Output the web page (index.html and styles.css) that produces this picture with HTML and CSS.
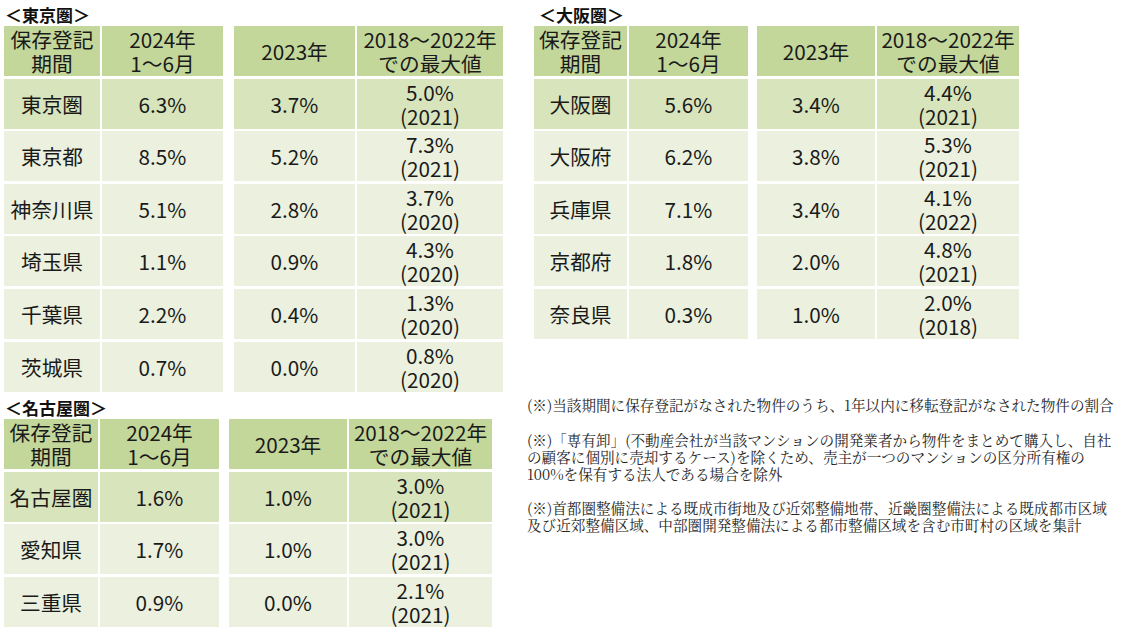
FILE: index.html
```html
<!DOCTYPE html>
<html lang="ja">
<head>
<meta charset="utf-8">
<link rel="stylesheet" href="styles.css">
</head>
<body>
<div class="page">
  <section class="region tokyo">
    <div class="label">＜東京圏＞</div>
    <div class="tbl">
      <div class="half a">
        <div class="c h">保存登記<br>期間</div><div class="c h">2024年<br>1～6月</div>
        <div class="c r1">東京圏</div><div class="c r1">6.3%</div>
        <div class="c">東京都</div><div class="c">8.5%</div>
        <div class="c">神奈川県</div><div class="c">5.1%</div>
        <div class="c">埼玉県</div><div class="c">1.1%</div>
        <div class="c">千葉県</div><div class="c">2.2%</div>
        <div class="c">茨城県</div><div class="c">0.7%</div>
      </div>
      <div class="half b">
        <div class="c h">2023年</div><div class="c h">2018～2022年<br>での最大値</div>
        <div class="c r1">3.7%</div><div class="c r1">5.0%<br>(2021)</div>
        <div class="c">5.2%</div><div class="c">7.3%<br>(2021)</div>
        <div class="c">2.8%</div><div class="c">3.7%<br>(2020)</div>
        <div class="c">0.9%</div><div class="c">4.3%<br>(2020)</div>
        <div class="c">0.4%</div><div class="c">1.3%<br>(2020)</div>
        <div class="c">0.0%</div><div class="c">0.8%<br>(2020)</div>
      </div>
    </div>
  </section>

  <section class="region osaka">
    <div class="label">＜大阪圏＞</div>
    <div class="tbl">
      <div class="half a">
        <div class="c h">保存登記<br>期間</div><div class="c h">2024年<br>1～6月</div>
        <div class="c r1">大阪圏</div><div class="c r1">5.6%</div>
        <div class="c">大阪府</div><div class="c">6.2%</div>
        <div class="c">兵庫県</div><div class="c">7.1%</div>
        <div class="c">京都府</div><div class="c">1.8%</div>
        <div class="c">奈良県</div><div class="c">0.3%</div>
      </div>
      <div class="half b">
        <div class="c h">2023年</div><div class="c h">2018～2022年<br>での最大値</div>
        <div class="c r1">3.4%</div><div class="c r1">4.4%<br>(2021)</div>
        <div class="c">3.8%</div><div class="c">5.3%<br>(2021)</div>
        <div class="c">3.4%</div><div class="c">4.1%<br>(2022)</div>
        <div class="c">2.0%</div><div class="c">4.8%<br>(2021)</div>
        <div class="c">1.0%</div><div class="c">2.0%<br>(2018)</div>
      </div>
    </div>
  </section>

  <section class="region nagoya">
    <div class="label">＜名古屋圏＞</div>
    <div class="tbl">
      <div class="half a">
        <div class="c h">保存登記<br>期間</div><div class="c h">2024年<br>1～6月</div>
        <div class="c r1">名古屋圏</div><div class="c r1">1.6%</div>
        <div class="c">愛知県</div><div class="c">1.7%</div>
        <div class="c">三重県</div><div class="c">0.9%</div>
      </div>
      <div class="half b">
        <div class="c h">2023年</div><div class="c h">2018～2022年<br>での最大値</div>
        <div class="c r1">1.0%</div><div class="c r1">3.0%<br>(2021)</div>
        <div class="c">1.0%</div><div class="c">3.0%<br>(2021)</div>
        <div class="c">0.0%</div><div class="c">2.1%<br>(2021)</div>
      </div>
    </div>
  </section>

  <div class="notes">
    <p>(※)当該期間に保存登記がなされた物件のうち、1年以内に移転登記がなされた物件の割合</p>
    <p>(※)「専有卸」(不動産会社が当該マンションの開発業者から物件をまとめて購入し、自社<br>の顧客に個別に売却するケース)を除くため、売主が一つのマンションの区分所有権の<br>100%を保有する法人である場合を除外</p>
    <p>(※)首都圏整備法による既成市街地及び近郊整備地帯、近畿圏整備法による既成都市区域<br>及び近郊整備区域、中部圏開発整備法による都市整備区域を含む市町村の区域を集計</p>
  </div>
</div>
</body>
</html>
```

FILE: styles.css
```css
html, body {
  margin: 0;
  padding: 0;
  background: #ffffff;
}

.page {
  width: 1122px;
  height: 629px;
  overflow: hidden;
  display: grid;
  grid-template-columns: 523px 595px;
  grid-template-rows: 391px 238px;
  padding: 3px 0 0 4px;
  box-sizing: border-box;
  font-family: "Noto Sans CJK JP", "Noto Sans", sans-serif;
  color: #1a1a1a;
}

.label {
  height: 23px;
  line-height: 23px;
  font-size: 17px;
  font-weight: 700;
  padding-left: 1px;
  color: #111;
}

.tbl {
  display: flex;
}

.half {
  display: grid;
  row-gap: 2.6px;
  column-gap: 2px;
  grid-auto-rows: 50px;
}

.c {
  background: #ebf1de;
  display: flex;
  align-items: center;
  justify-content: center;
  text-align: center;
  font-size: 20.7px;
  line-height: 24px;
  white-space: nowrap;
}

.c.h {
  background: #c4d79b;
  padding-bottom: 1px;
}

.c.r1 {
  background: #d8e4bc;
}

/* Tokyo */
.tokyo .a { grid-template-columns: 96px 121px; }
.tokyo .b { grid-template-columns: 121px 146px; }
.tokyo .tbl { gap: 11px; }

/* Osaka */
.osaka { padding-left: 7px; }
.osaka .label { padding-left: 5px; }
.osaka .a { grid-template-columns: 93px 119px; }
.osaka .b { grid-template-columns: 118px 142px; }
.osaka .tbl { gap: 9px; }

/* Nagoya */
.nagoya { padding-top: 2px; }
.nagoya .a { grid-template-columns: 94px 119px; }
.nagoya .b { grid-template-columns: 118px 143px; }
.nagoya .tbl { gap: 10px; }

/* Notes */
.notes {
  padding-top: 2px;
  font-family: "Noto Serif CJK JP", "IPAMincho", "Noto Sans CJK JP", serif;
  font-size: 14.6px;
  line-height: 17px;
  color: #262626;
  white-space: nowrap;
}

.notes p {
  margin: 0 0 17.5px 0;
}
```
